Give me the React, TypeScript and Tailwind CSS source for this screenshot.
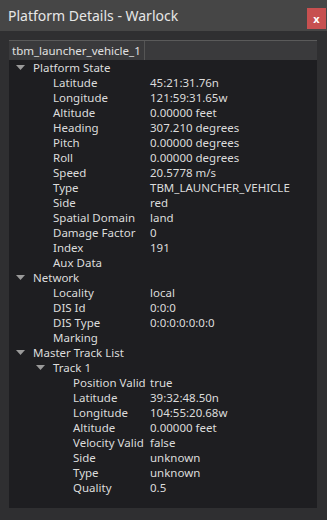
import React from "react";

type Row = { label: string; value?: string; level: number; expandable?: boolean };

const rows: Row[] = [
  { label: "Platform State", level: 0, expandable: true },
  { label: "Latitude", value: "45:21:31.76n", level: 1 },
  { label: "Longitude", value: "121:59:31.65w", level: 1 },
  { label: "Altitude", value: "0.00000 feet", level: 1 },
  { label: "Heading", value: "307.210 degrees", level: 1 },
  { label: "Pitch", value: "0.00000 degrees", level: 1 },
  { label: "Roll", value: "0.00000 degrees", level: 1 },
  { label: "Speed", value: "20.5778 m/s", level: 1 },
  { label: "Type", value: "TBM_LAUNCHER_VEHICLE", level: 1 },
  { label: "Side", value: "red", level: 1 },
  { label: "Spatial Domain", value: "land", level: 1 },
  { label: "Damage Factor", value: "0", level: 1 },
  { label: "Index", value: "191", level: 1 },
  { label: "Aux Data", value: "", level: 1 },
  { label: "Network", level: 0, expandable: true },
  { label: "Locality", value: "local", level: 1 },
  { label: "DIS Id", value: "0:0:0", level: 1 },
  { label: "DIS Type", value: "0:0:0:0:0:0:0", level: 1 },
  { label: "Marking", value: "", level: 1 },
  { label: "Master Track List", level: 0, expandable: true },
  { label: "Track 1", level: 1, expandable: true },
  { label: "Position Valid", value: "true", level: 2 },
  { label: "Latitude", value: "39:32:48.50n", level: 2 },
  { label: "Longitude", value: "104:55:20.68w", level: 2 },
  { label: "Altitude", value: "0.00000 feet", level: 2 },
  { label: "Velocity Valid", value: "false", level: 2 },
  { label: "Side", value: "unknown", level: 2 },
  { label: "Type", value: "unknown", level: 2 },
  { label: "Quality", value: "0.5", level: 2 },
];

const arrowIndent = ["w-[7px]", "w-[27px]", "w-[47px]"];
const labelIndent = ["w-[24px]", "w-[44px]", "w-[64px]"];
const labelWidth = ["w-[117px]", "w-[97px]", "w-[77px]"];

function Arrow() {
  return (
    <svg width="9" height="5" viewBox="0 0 9 5" className="shrink-0">
      <polygon points="0,0 9,0 4.5,5" fill="#9a9a9a" />
    </svg>
  );
}

export default function App() {
  return (
    <div
      className="w-[327px] h-[520px] bg-[#2f2f31] flex flex-col overflow-hidden text-[#dcdcdc]"
      style={{ fontFamily: '"Noto Sans", "Open Sans", sans-serif' }}
    >
      <div className="h-[31px] shrink-0 bg-[#464646] flex items-center justify-between pl-[8px] pr-[1px]">
        <span className="text-[14px] text-[#e6e6e6] leading-none">Platform Details - Warlock</span>
        <div className="w-[19px] h-[21px] bg-[#c75050] flex items-center justify-center text-white text-[11px] font-bold leading-none mt-[6px]">
          x
        </div>
      </div>
      <div className="flex-1 flex flex-col pt-[9px] pl-[9px] pr-[10px] pb-[12px]">
        <div className="h-[20px] shrink-0 flex bg-[#3a3a3c] border-t border-[#5a5a5a]">
          <div className="w-[136px] border-r border-[#555] pl-[3px] text-[11.5px] leading-[19px] text-[#e0e0e0]">
            tbm_launcher_vehicle_1
          </div>
          <div className="flex-1" />
        </div>
        <div className="flex-1 bg-[#1e1e21] text-[11.5px]">
          {rows.map((r, i) => (
            <div key={i} className="h-[15px] flex items-center leading-none whitespace-nowrap">
              {r.expandable ? (
                <>
                  <div className={`${arrowIndent[r.level]} shrink-0`} />
                  <div className="w-[17px] shrink-0 flex items-center">
                    <Arrow />
                  </div>
                  <div>{r.label}</div>
                </>
              ) : (
                <>
                  <div className={`${labelIndent[r.level]} shrink-0`} />
                  <div className={`${labelWidth[r.level]} shrink-0`}>{r.label}</div>
                  <div>{r.value}</div>
                </>
              )}
            </div>
          ))}
        </div>
      </div>
    </div>
  );
}
